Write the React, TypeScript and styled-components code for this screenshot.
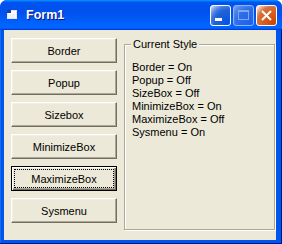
import styled, { createGlobalStyle, css } from "styled-components";

const GlobalStyle = createGlobalStyle`
  html, body {
    margin: 0;
    padding: 0;
    background: #ffffff;
  }
  body {
    font-family: "Liberation Sans", Arial, sans-serif;
  }
`;

const BUTTONS = ["Border", "Popup", "Sizebox", "MinimizeBox", "MaximizeBox", "Sysmenu"];
const STATUS = [
  "Border = On",
  "Popup = Off",
  "SizeBox = Off",
  "MinimizeBox = On",
  "MaximizeBox = Off",
  "Sysmenu = On",
];

const App = () => {
  return (
    <>
      <GlobalStyle />
      <Window>
        <TitleBar>
          <FormIcon />
          <Title>Form1</Title>
          <CaptionButtons>
            <CapButton $kind="min">
              <svg width="19" height="19" viewBox="0 0 19 19">
                <rect x="4" y="12" width="7" height="3" fill="#fff" />
              </svg>
            </CapButton>
            <CapButton $kind="max" $disabled>
              <svg width="19" height="19" viewBox="0 0 19 19">
                <rect x="4.5" y="4.5" width="10" height="9" fill="none" stroke="#7fa6f0" />
                <rect x="4" y="4" width="11" height="2" fill="#7fa6f0" />
              </svg>
            </CapButton>
            <CapButton $kind="close">
              <svg width="19" height="19" viewBox="0 0 19 19">
                <path d="M5 5 L14 14 M14 5 L5 14" stroke="#fff" strokeWidth="2" />
              </svg>
            </CapButton>
          </CaptionButtons>
        </TitleBar>
        <Frame>
          <Client>
            <ButtonColumn>
              {BUTTONS.map((b, i) => (
                <CmdButton key={b} $focused={i === 4}>
                  {b}
                </CmdButton>
              ))}
            </ButtonColumn>
            <Group>
              <Caption>Current Style</Caption>
              <StatusList>
                {STATUS.map((s) => (
                  <StatusLine key={s}>{s}</StatusLine>
                ))}
              </StatusList>
            </Group>
          </Client>
        </Frame>
      </Window>
    </>
  );
};

const FormIcon = () => (
  <svg width="11" height="10" viewBox="0 0 11 10">
    <rect x="0.5" y="0.5" width="9" height="8" fill="#fff" stroke="#dfe8ff" />
    <rect x="0" y="0" width="4" height="3" fill="#1c3f9e" />
    <rect x="1" y="4" width="7" height="4" fill="#eef2fb" />
  </svg>
);

const Window = styled.div`
  width: 282px;
  height: 244px;
  display: flex;
  flex-direction: column;
  border-radius: 7px 7px 0 0;
  overflow: hidden;
  background: #0055ea;
`;

const TitleBar = styled.div`
  flex: 0 0 30px;
  display: flex;
  align-items: center;
  padding: 0 5px 0 7px;
  box-sizing: border-box;
  background: linear-gradient(
    180deg,
    #0997ff,
    #0053ee 8%,
    #0050ee 40%,
    #0066ff 88%,
    #0066ff 93%,
    #005bff 95%,
    #003dd7 96%,
    #003dd7
  );
`;

const Title = styled.span`
  margin-left: 8px;
  font: bold 12.5px "Liberation Sans", Arial, sans-serif;
  color: #ffffff;
  text-shadow: 1px 1px #0f1089;
  flex: 1;
`;

const CaptionButtons = styled.div`
  display: flex;
  gap: 2px;
  margin-top: 1px;
`;

const CapButton = styled.div<{ $kind: "min" | "max" | "close"; $disabled?: boolean }>`
  box-sizing: border-box;
  width: 21px;
  height: 21px;
  border: 1px solid #ffffff;
  border-radius: 3px;
  display: flex;
  align-items: center;
  justify-content: center;
  background: radial-gradient(
    circle at 90% 90%,
    #0054e9 0%,
    #2263d5 55%,
    #4479e4 70%,
    #a3bbec 90%,
    #ffffff 100%
  );
  ${(p) =>
    p.$disabled &&
    css`
      border-color: #8db2f5;
      background: radial-gradient(
        circle at 90% 90%,
        #1a62ee 0%,
        #2f6ee6 60%,
        #5187ec 80%,
        #7ea6f0 100%
      );
    `}
  ${(p) =>
    p.$kind === "close" &&
    css`
      background: radial-gradient(
        circle at 90% 90%,
        #cc4600 0%,
        #dc6527 55%,
        #cd7546 70%,
        #ffccb2 90%,
        #ffffff 100%
      );
    `}
`;

const Frame = styled.div`
  flex: 1;
  display: flex;
  padding: 0 6px 4px 4px;
  background: #0055ea;
  box-shadow: inset -1px -1px #00138c, inset 1px 0 #166aee;
`;

const Client = styled.div`
  flex: 1;
  display: flex;
  align-items: flex-start;
  padding: 8px 0 0 7px;
  background: #ece9d8;
`;

const ButtonColumn = styled.div`
  display: flex;
  flex-direction: column;
  gap: 7px;
`;

const CmdButton = styled.button<{ $focused?: boolean }>`
  box-sizing: border-box;
  width: 106px;
  height: 25px;
  padding: 0;
  margin: 0;
  font: 11px "Liberation Sans", Arial, sans-serif;
  color: #000000;
  background: #ece9d8;
  border: 1px solid;
  border-color: #ffffff #716f64 #716f64 #ffffff;
  box-shadow: inset -1px -1px #aca899, inset 1px 1px #f1efe2;
  ${(p) =>
    p.$focused &&
    css`
      border-color: #000000;
      box-shadow: inset 1px 1px #ffffff, inset -1px -1px #716f64, inset -2px -2px #aca899;
      outline: 1px dotted #000000;
      outline-offset: -4px;
    `}
`;

const Group = styled.fieldset`
  box-sizing: border-box;
  margin: 0 0 0 7px;
  width: 151px;
  height: 192px;
  min-width: 0;
  padding: 10px 0 0 7px;
  border: 1px solid #aca899;
  box-shadow: inset 1px 1px #ffffff, 1px 1px #ffffff;
`;

const Caption = styled.legend`
  margin-left: -1px;
  padding: 0 2px;
  font: 11px/13px "Liberation Sans", Arial, sans-serif;
  color: #000000;
  background: #ece9d8;
`;

const StatusList = styled.div`
  display: flex;
  flex-direction: column;
`;

const StatusLine = styled.div`
  font: 11px/13px "Liberation Sans", Arial, sans-serif;
  color: #000000;
  white-space: nowrap;
`;

export default App;
